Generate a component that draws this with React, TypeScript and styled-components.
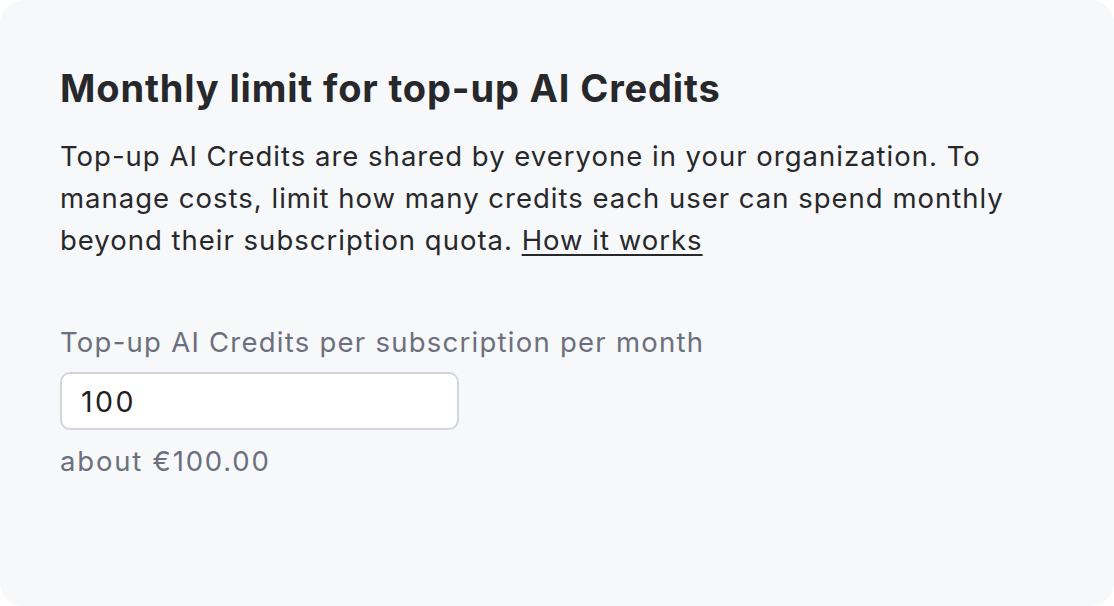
import React from "react";
import styled, { createGlobalStyle } from "styled-components";

const GlobalStyle = createGlobalStyle`
  html, body {
    margin: 0;
    padding: 0;
    background: #ffffff;
  }
`

const Card = styled.div`
  box-sizing: border-box;
  width: 1114px;
  height: 606px;
  background: #f7f8fa;
  border-radius: 24px;
  padding: 65px 60px 0 60px;
  display: flex;
  flex-direction: column;
  font-family: Inter, "Noto Sans", sans-serif;
`

const Title = styled.h2`
  margin: 0;
  font-weight: 700;
  font-size: 38px;
  line-height: 46px;
  color: #27282c;
  letter-spacing: 0.85px;
`

const Description = styled.p`
  margin: 24px 0 0 0;
  font-size: 27.5px;
  line-height: 42px;
  color: #27282c;
  letter-spacing: 1px;
  white-space: nowrap;
`

const Link = styled.a`
  color: #27282c;
  text-decoration: underline;
  text-underline-offset: 4px;
  text-decoration-thickness: 2px;
`

const Field = styled.div`
  display: flex;
  flex-direction: column;
  margin-top: 61px;
`

const Label = styled.label`
  font-size: 27.5px;
  line-height: 40px;
  color: #6c707e;
  letter-spacing: 1.25px;
`

const Input = styled.input`
  box-sizing: border-box;
  margin-top: 10px;
  width: 399px;
  height: 58px;
  padding: 0 19px;
  border: 2px solid #d3d5db;
  border-radius: 10px;
  background: #ffffff;
  font-family: Inter, "Noto Sans", sans-serif;
  font-size: 28.5px;
  letter-spacing: 2.5px;
  color: #1f2024;
  outline: none;
`

const Hint = styled.div`
  margin-top: 11px;
  font-size: 27.5px;
  line-height: 40px;
  color: #6c707e;
  letter-spacing: 1.8px;
`

export default function App() {
  return (
    <>
      <GlobalStyle />
      <Card>
        <Title>Monthly limit for top-up AI Credits</Title>
        <Description>
          Top-up AI Credits are shared by everyone in your organization. To
          <br />
          manage costs, limit how many credits each user can spend monthly
          <br />
          beyond their subscription quota. <Link href="#">How it works</Link>
        </Description>
        <Field>
          <Label>Top-up AI Credits per subscription per month</Label>
          <Input defaultValue="100" />
          <Hint>about €100.00</Hint>
        </Field>
      </Card>
    </>
  );
}
